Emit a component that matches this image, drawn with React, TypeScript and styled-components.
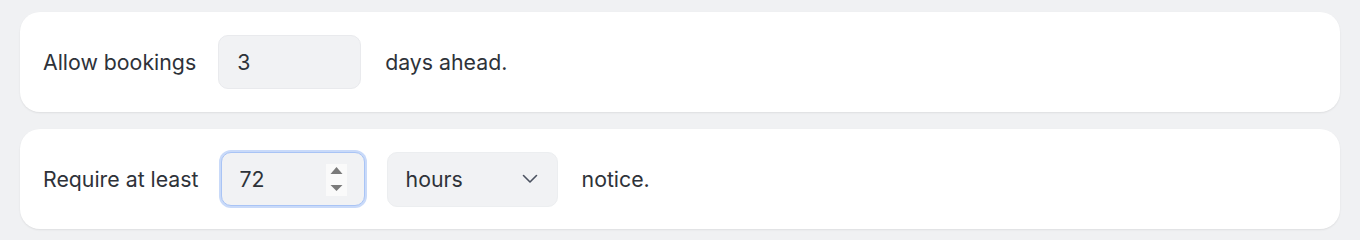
import styled, { createGlobalStyle } from "styled-components";

const GlobalStyle = createGlobalStyle`
    html, body {
        margin: 0;
        padding: 0;
        background: #f0f1f3;
        font-family: Inter, "Noto Sans", sans-serif;
        color: #2e3239;
    }
`;

export default function App() {
    return (
        <>
            <GlobalStyle />
            <Root>
                <Card>
                    <Label>Allow bookings</Label>
                    <Field type="text" defaultValue="3" $width={143} readOnly />
                    <Label $trailing>days ahead.</Label>
                </Card>
                <Card>
                    <Label>Require at least</Label>
                    <NumberWrap>
                        <Field type="number" defaultValue={72} $width={144} $focused readOnly />
                        <Spinner viewBox="0 0 21 32" width="21" height="32">
                            <path d="M10.5 3 L16.5 10 L4.5 10 Z" fill="#7a7a7a" />
                            <path d="M4.5 21 L16.5 21 L10.5 27 Z" fill="#7a7a7a" />
                        </Spinner>
                    </NumberWrap>
                    <SelectWrap>
                        <Select defaultValue="hours">
                            <option value="minutes">minutes</option>
                            <option value="hours">hours</option>
                            <option value="days">days</option>
                        </Select>
                        <Chevron viewBox="0 0 16 10" width="16" height="10">
                            <path d="M1.5 1.5 L8 8 L14.5 1.5" fill="none" stroke="#4b5260" strokeWidth="1.6" strokeLinecap="round" strokeLinejoin="round" />
                        </Chevron>
                    </SelectWrap>
                    <Label $trailing>notice.</Label>
                </Card>
            </Root>
        </>
    );
}

const Root = styled.div`
    display: flex;
    flex-direction: column;
    gap: 17px;
    padding: 12px 20px;
`;

const Card = styled.div`
    display: flex;
    align-items: center;
    gap: 22px;
    height: 100px;
    box-sizing: border-box;
    padding: 0 23px;
    background: #ffffff;
    border-radius: 20px;
    box-shadow: 0 1px 2px rgba(0, 0, 0, 0.08);
`;

const Label = styled.span<{ $trailing?: boolean }>`
    font-size: 21.3px;
    color: #2e3239;
    white-space: nowrap;
    margin-left: ${(p) => (p.$trailing ? "2px" : "0")};
`;

const Field = styled.input<{ $width: number; $focused?: boolean }>`
    width: ${(p) => p.$width}px;
    height: 54px;
    box-sizing: border-box;
    padding: 0 12px 0 18px;
    border: 1px solid ${(p) => (p.$focused ? "#a9c4f5" : "#e9eaed")};
    border-radius: 10px;
    background: #f1f2f4;
    font-family: inherit;
    font-size: 21.3px;
    color: #2e3239;
    outline: none;
    box-shadow: ${(p) => (p.$focused ? "0 0 0 2px #c9daf9" : "none")};
    -moz-appearance: textfield;

    &::-webkit-inner-spin-button,
    &::-webkit-outer-spin-button {
        -webkit-appearance: none;
        margin: 0;
    }
`;

const NumberWrap = styled.div`
    position: relative;
    display: flex;
    align-items: center;
`;

const Spinner = styled.svg`
    position: absolute;
    right: 18px;
    top: 12px;
    background: #fafafa;
    pointer-events: none;
`;

const SelectWrap = styled.div`
    position: relative;
    display: flex;
    align-items: center;
`;

const Select = styled.select`
    appearance: none;
    width: 171px;
    height: 55px;
    box-sizing: border-box;
    padding: 0 40px 0 18px;
    border: 1px solid #eceef0;
    border-radius: 10px;
    background: #f1f2f4;
    font-family: inherit;
    font-size: 21.3px;
    color: #2e3239;
    outline: none;
`;

const Chevron = styled.svg`
    position: absolute;
    right: 20px;
    pointer-events: none;
`;
